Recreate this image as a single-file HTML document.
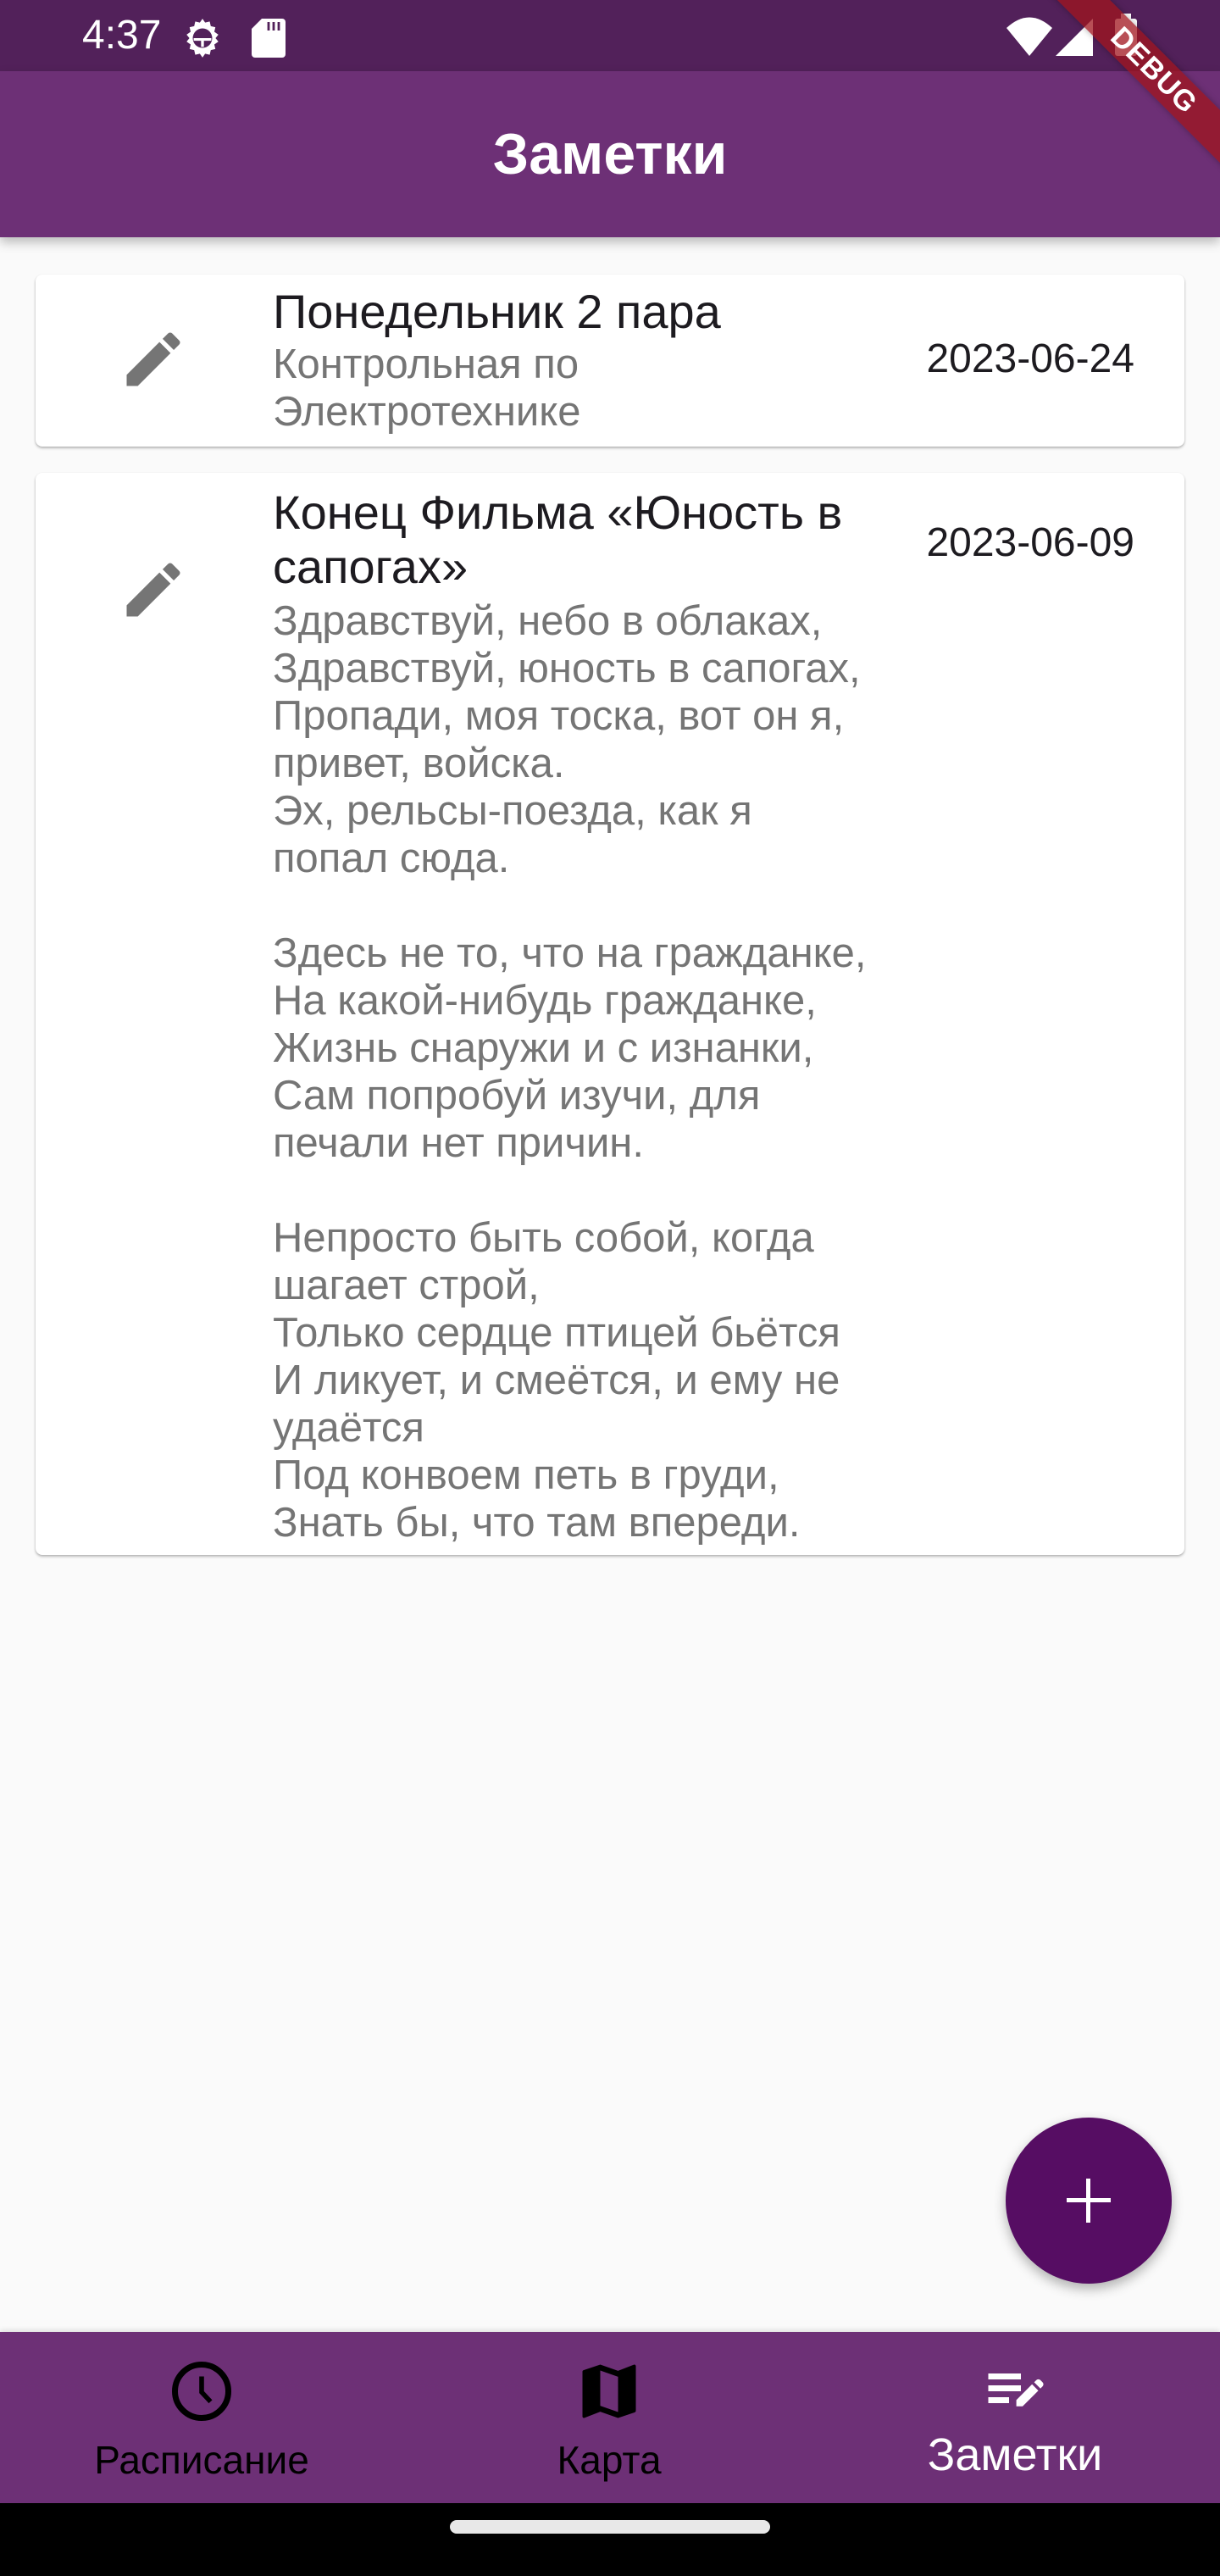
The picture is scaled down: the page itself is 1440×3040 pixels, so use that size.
<!DOCTYPE html>
<html><head><meta charset="utf-8"><style>
*{margin:0;padding:0;box-sizing:border-box}
body{width:1440px;height:3040px;background:#fafafa;position:relative;overflow:hidden;font-family:"Liberation Sans","Noto Sans CJK SC",sans-serif}
.abs{position:absolute}
#status{left:0;top:0;width:1440px;height:84px;background:#52215a}
#appbar{left:0;top:84px;width:1440px;height:196px;background:#6d3076;box-shadow:0 6px 12px rgba(0,0,0,.25)}
.card{position:absolute;left:42px;width:1356px;background:#fff;border-radius:8px;box-shadow:0 2px 3px rgba(0,0,0,.22),0 1px 2px rgba(0,0,0,.12)}
.t{position:absolute;left:280px;font-size:56px;line-height:64px;color:#1d1b20;white-space:nowrap}
.s{position:absolute;left:280px;font-size:49px;line-height:56px;color:#757575;white-space:nowrap}
.d{position:absolute;right:59px;font-size:48px;color:#1d1b20;line-height:56px}
.nl{position:absolute;font-size:46px;color:#000;transform:translateX(-50%);white-space:nowrap;top:2876px}
</style></head><body>
<div id="status" class="abs"></div>
<div class="abs" style="left:97px;top:16px;font-size:48px;color:#fff;line-height:52px">4:37</div>
<svg class="abs" style="left:214px;top:20px" width="50" height="50" viewBox="0 0 24 24"><path fill="#fff" d="M12 1l1.5 2.2 2.6-.6.6 2.6 2.6.6-.6 2.6L21 10l-1.6 2 1.6 2-2.3 1.6.6 2.6-2.6.6-.6 2.6-2.6-.6L12 23l-1.5-2.2-2.6.6-.6-2.6-2.6-.6.6-2.6L3 14l1.6-2L3 10l2.3-1.6-.6-2.6 2.6-.6.6-2.6 2.6.6z"/><circle cx="12" cy="12" r="5.5" fill="#52215a"/><path fill="#fff" d="M7 12h10v1.5h-4.2V17h-1.6v-3.5H7z"/></svg>
<svg class="abs" style="left:297px;top:22px" width="40" height="46" viewBox="0 0 20 23"><path fill="#fff" d="M6 0h12a2 2 0 0 1 2 2v19a2 2 0 0 1-2 2H2a2 2 0 0 1-2-2V6z"/><path stroke="#52215a" stroke-width="1.4" d="M10 2v5M13 2v5M16 2v5"/></svg>
<svg class="abs" style="left:1188px;top:20px" width="54" height="46" viewBox="0 0 54 46"><path fill="#fff" d="M0 13 Q27 -12 54 13 L27 46z"/></svg>
<svg class="abs" style="left:1246px;top:22px" width="44" height="44"><path fill="#fff" d="M44 0V44H0z"/></svg>
<div class="abs" style="left:1316px;top:22px;width:26px;height:44px;background:#fff;border-radius:3px"></div>
<div class="abs" style="left:1323px;top:16px;width:12px;height:8px;background:#fff"></div>
<div id="appbar" class="abs"></div>
<div class="abs" style="left:0;width:1440px;top:142px;text-align:center;font-size:68px;font-weight:bold;color:#fff;line-height:80px">Заметки</div>
<div class="abs" style="left:1162px;top:61px;width:400px;height:44px;background:rgba(160,20,30,.75);transform:rotate(45deg);color:#fff;font-weight:bold;font-size:34px;line-height:44px;text-align:center;letter-spacing:1px;box-shadow:0 0 8px rgba(0,0,0,.3)">DEBUG</div>

<div class="card" style="top:324px;height:203px">
<svg class="abs" style="left:97px;top:58px" width="84" height="84" viewBox="0 0 24 24"><path fill="#757575" d="M3 17.25V21h3.75L17.81 9.94l-3.75-3.75L3 17.25zM20.71 7.04a1 1 0 0 0 0-1.41l-2.34-2.34a1 1 0 0 0-1.41 0l-1.83 1.83 3.75 3.75 1.83-1.83z"/></svg>
<div class="t" style="top:12px">Понедельник 2 пара</div>
<div class="s" style="top:78px">Контрольная по<br>Электротехнике</div>
<div class="d" style="top:72px">2023-06-24</div>
</div>

<div class="card" style="top:558px;height:1277px">
<svg class="abs" style="left:97px;top:96px" width="84" height="84" viewBox="0 0 24 24"><path fill="#757575" d="M3 17.25V21h3.75L17.81 9.94l-3.75-3.75L3 17.25zM20.71 7.04a1 1 0 0 0 0-1.41l-2.34-2.34a1 1 0 0 0-1.41 0l-1.83 1.83 3.75 3.75 1.83-1.83z"/></svg>
<div class="t" style="top:15px">Конец Фильма «Юность в<br>сапогах»</div>
<div class="s" style="top:147px">Здравствуй, небо в облаках,<br>Здравствуй, юность в сапогах,<br>Пропади, моя тоска, вот он я,<br>привет, войска.<br>Эх, рельсы-поезда, как я<br>попал сюда.<br>&nbsp;<br>Здесь не то, что на гражданке,<br>На какой-нибудь гражданке,<br>Жизнь снаружи и с изнанки,<br>Сам попробуй изучи, для<br>печали нет причин.<br>&nbsp;<br>Непросто быть собой, когда<br>шагает строй,<br>Только сердце птицей бьётся<br>И ликует, и смеётся, и ему не<br>удаётся<br>Под конвоем петь в груди,<br>Знать бы, что там впереди.</div>
<div class="d" style="top:55px">2023-06-09</div>
</div>

<div class="abs" style="left:1187px;top:2499px;width:196px;height:196px;border-radius:50%;background:#560d63;box-shadow:0 6px 14px rgba(0,0,0,.3)"></div>
<div class="abs" style="left:1259px;top:2594px;width:52px;height:5px;background:#fff"></div>
<div class="abs" style="left:1282px;top:2571px;width:5px;height:52px;background:#fff"></div>

<div class="abs" style="left:0;top:2752px;width:1440px;height:202px;background:#6d3076;box-shadow:0 -2px 6px rgba(0,0,0,.12)"></div>
<svg class="abs" style="left:196px;top:2780px" width="84" height="84" viewBox="0 0 24 24"><circle cx="12" cy="12" r="9" fill="none" stroke="#000" stroke-width="2"/><path d="M12 7v5.3l3 3.2" fill="none" stroke="#000" stroke-width="1.6"/></svg>
<svg class="abs" style="left:677px;top:2780px" width="84" height="84" viewBox="0 0 24 24"><path d="M20.5 3l-.16.03L15 5.1 9 3 3.36 4.9c-.21.07-.36.25-.36.48V20.5c0 .28.22.5.5.5l.16-.03L9 18.9l6 2.1 5.64-1.9c.21-.07.36-.25.36-.48V3.5c0-.28-.22-.5-.5-.5zM15 19l-6-2.11V5l6 2.11V19z"/></svg>
<svg class="abs" style="left:1156px;top:2780px" width="84" height="84" viewBox="0 0 24 24"><path fill="#fff" d="M3 10h11v2H3zm0-4h11v2H3zm0 8h7v2H3zm17.59-2.93l.71-.71a1 1 0 0 0 0-1.41l-.71-.71a1 1 0 0 0-1.41 0l-.71.71 2.12 2.12zm-.71.71l-5.3 5.3H12.46v-2.12l5.3-5.3 2.12 2.12z"/></svg>
<div class="nl" style="left:238px">Расписание</div>
<div class="nl" style="left:719px">Карта</div>
<div class="nl" style="left:1198px;color:#fff;font-size:54px;top:2866px">Заметки</div>
<div class="abs" style="left:0;top:2954px;width:1440px;height:86px;background:#000"></div>
<div class="abs" style="left:531px;top:2974px;width:378px;height:16px;border-radius:8px;background:#e8e8e8"></div>
</body></html>
